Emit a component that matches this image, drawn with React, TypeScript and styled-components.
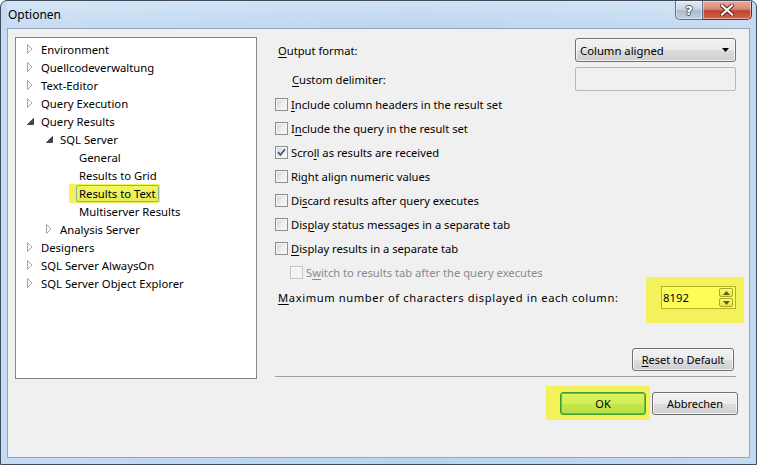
import React from 'react';
import styled, { createGlobalStyle } from 'styled-components';

const FONT = `"Noto Sans", "Open Sans", sans-serif`;

const Global = createGlobalStyle`
  html, body { margin: 0; padding: 0; background: #ffffff; }
  body { font-family: ${FONT}; font-size: 11px; color: #000; }
  * { box-sizing: border-box; }
`;

const Window = styled.div`
  width: 757px;
  height: 465px;
  border: 1px solid #414c5a;
  border-radius: 7px 7px 0 0;
  background: linear-gradient(to right, #c4dbf3 0%, #b9d3ef 55%, #c3daf2 100%);
  display: flex;
  flex-direction: column;
  padding: 0 6px 6px 6px;
  overflow: hidden;
`;

const TitleBar = styled.div`
  height: 27px;
  display: flex;
  align-items: flex-start;
  background: linear-gradient(to bottom, rgba(255,255,255,0.3), rgba(255,255,255,0.05));
`;

const Title = styled.div`
  padding: 6px 0 0 1px;
  font-size: 12px;
  line-height: 16px;
  color: #000;
`;

const CaptionButtons = styled.div`
  margin-left: auto;
  margin-right: -2px;
  display: flex;
`;

const CaptionButton = styled.div<{ $close?: boolean }>`
  height: 19px;
  width: ${p => (p.$close ? '49px' : '28px')};
  display: flex;
  align-items: center;
  justify-content: center;
  border: 1px solid ${p => (p.$close ? '#6b2a22' : '#5f6f83')};
  border-top: none;
  border-left: ${p => (p.$close ? 'none' : '1px solid #5f6f83')};
  border-radius: ${p => (p.$close ? '0 0 5px 0' : '0 0 0 5px')};
  background: ${p =>
    p.$close
      ? 'linear-gradient(to bottom, #e9a99c 0%, #d98878 45%, #c2412b 55%, #d1664c 100%)'
      : 'linear-gradient(to bottom, #e3ebf4 0%, #c9d6e5 45%, #a9bcd2 55%, #bdd0e6 100%)'};
  box-shadow: inset 0 0 0 1px rgba(255,255,255,0.45);
`;

const HelpGlyph = styled.span`
  font-family: "DejaVu Sans", sans-serif;
  font-weight: bold;
  font-size: 13px;
  line-height: 13px;
  color: #ffffff;
  text-shadow: 1px 0 0 #4c5a6c, -1px 0 0 #4c5a6c, 0 1px 0 #4c5a6c, 0 -1px 0 #4c5a6c;
`;

const Client = styled.div`
  flex: 1;
  border: 1px solid #97a5b6;
  background: #f0f0f0;
  display: flex;
  padding: 8px 11px 0 7px;
`;

const TreeBox = styled.div`
  width: 242px;
  height: 342px;
  border: 1px solid #828790;
  background: #ffffff;
  padding-top: 2px;
  display: flex;
  flex-direction: column;
`;

const TreeRow = styled.div<{ $level: number }>`
  height: 18px;
  display: flex;
  align-items: center;
  padding-left: ${p => 5 + p.$level * 19}px;
  white-space: nowrap;
`;

const Expander = styled.span`
  width: 17px;
  height: 18px;
  display: flex;
  align-items: center;
  padding-left: 6px;
`;

const NodeLabel = styled.span<{ $selected?: boolean }>`
  display: inline-flex;
  align-items: center;
  height: 17px;
  padding: 0 ${p => (p.$selected ? '2px' : '3px')};
  border: ${p => (p.$selected ? '1px solid #8db09a' : 'none')};
  border-radius: 2px;
  background: ${p => (p.$selected ? 'linear-gradient(to bottom, #f4f75e, #e3ee5a)' : 'transparent')};
  font-size: 11.3px;
`;

const Marker = styled.span`
  display: inline-flex;
  align-items: center;
  background: #f3f25a;
`;

const TreeMarker = styled(Marker)`
  margin: -1px -1px -1px -7px;
  padding: 1px 1px 1px 7px;
`;

const RightPanel = styled.div`
  flex: 1;
  margin-left: 18px;
  display: flex;
  flex-direction: column;
`;

const FieldRow = styled.div<{ $top: number; $indent?: number }>`
  height: 24px;
  margin-top: ${p => p.$top}px;
  display: flex;
  align-items: center;
  justify-content: space-between;
  padding-left: ${p => p.$indent ?? 0}px;
  padding-right: 2px;
`;

const FieldLabel = styled.span<{ $disabled?: boolean; $wide?: boolean }>`
  font-size: 11.2px;
  white-space: nowrap;
  letter-spacing: ${p => (p.$wide ? '0.6px' : '0')};
  color: ${p => (p.$disabled ? '#8a8a8a' : '#000')};
  u { text-decoration: underline; text-underline-offset: 2px; }
`;

const Select = styled.div`
  width: 161px;
  height: 24px;
  border: 1px solid #707070;
  border-radius: 3px;
  background: linear-gradient(to bottom, #f2f2f2 0%, #ebebeb 50%, #dddddd 51%, #cfcfcf 100%);
  box-shadow: inset 0 0 0 1px rgba(255,255,255,0.7);
  display: flex;
  align-items: center;
  justify-content: space-between;
  padding: 0 6px 0 4px;
  font-size: 11.3px;
`;

const TextBox = styled.div`
  width: 161px;
  height: 24px;
  border: 1px solid #b8b8b8;
  border-radius: 2px;
  background: #f0f0f0;
`;

const CheckRow = styled.div<{ $indent?: number }>`
  height: 24px;
  display: flex;
  align-items: center;
  gap: 3px;
  padding-left: ${p => p.$indent ?? 0}px;
`;

const Box = styled.span<{ $disabled?: boolean }>`
  width: 13px;
  height: 13px;
  border: 1px solid ${p => (p.$disabled ? '#c4c4c4' : '#8e8f8f')};
  background: ${p => (p.$disabled ? '#f4f4f4' : 'linear-gradient(135deg, #d6d6d6 0%, #efefef 60%, #fbfbfb 100%)')};
  box-shadow: inset 0 0 0 1px ${p => (p.$disabled ? '#f8f8f8' : '#f4f4f4')};
  display: flex;
  align-items: center;
  justify-content: center;
  flex: none;
`;

const MaxRow = styled.div`
  height: 23px;
  margin-top: 2px;
  display: flex;
  align-items: center;
  justify-content: space-between;
  padding-left: 3px;
  padding-right: 2px;
`;

const SpinMarker = styled(Marker)`
  margin: -9px -8px -14px -15px;
  padding: 9px 8px 14px 15px;
`;

const Spinner = styled.div`
  width: 75px;
  height: 23px;
  border: 1px solid #b4b322;
  background: #fdfd58;
  display: flex;
  align-items: center;
  justify-content: space-between;
  padding: 0 2px 0 1px;
  font-size: 11.3px;
`;

const SpinButtons = styled.div`
  display: flex;
  flex-direction: column;
  gap: 1px;
`;

const SpinButton = styled.div`
  width: 14px;
  height: 9px;
  border: 1px solid #a9a82a;
  border-radius: 2px;
  background: linear-gradient(to bottom, #fbfb70, #e6e64a);
  display: flex;
  align-items: center;
  justify-content: center;
`;

const ResetRow = styled.div`
  margin-top: 39px;
  display: flex;
  justify-content: flex-end;
  padding-right: 4px;
`;

const Button = styled.div<{ $w: number; $default?: boolean }>`
  width: ${p => p.$w}px;
  height: 23px;
  border: 1px solid ${p => (p.$default ? '#3e9f2c' : '#707070')};
  border-radius: 3px;
  background: ${p =>
    p.$default
      ? 'linear-gradient(to bottom, #dcf35e 0%, #d2ee56 50%, #c3e64b 51%, #b9df45 100%)'
      : 'linear-gradient(to bottom, #f2f2f2 0%, #ebebeb 50%, #dddddd 51%, #cfcfcf 100%)'};
  box-shadow: inset 0 0 0 1px ${p => (p.$default ? '#63c23c' : 'rgba(255,255,255,0.7)')};
  display: flex;
  align-items: center;
  justify-content: center;
  font-size: 11px;
  u { text-decoration: underline; text-underline-offset: 2px; }
`;

const Separator = styled.div`
  margin-top: 5px;
  margin-right: 2px;
  border-top: 1px solid #a0a0a0;
`;

const ButtonRow = styled.div`
  margin-top: 9px;
  display: flex;
  justify-content: flex-end;
  align-items: center;
  gap: 2px;
`;

const OkMarker = styled(Marker)`
  padding: 6px 4px 5px 14px;
`;

const Collapsed = () => (
  <svg width="6" height="10" viewBox="0 0 6 10">
    <path d="M0.5 0.5 L5 5 L0.5 9.5 Z" fill="#ffffff" stroke="#a6a6a6" strokeWidth="1" />
  </svg>
);

const Expanded = () => (
  <svg width="7" height="7" viewBox="0 0 7 7">
    <path d="M6.5 0.5 L6.5 6.5 L0.5 6.5 Z" fill="#464646" stroke="#464646" strokeWidth="1" strokeLinejoin="round" />
  </svg>
);

const Check = () => (
  <svg width="9" height="9" viewBox="0 0 9 9">
    <path d="M1 4.2 L3.4 6.8 L8 1.2" fill="none" stroke="#41577d" strokeWidth="1.8" />
  </svg>
);

type Node = { label: string; level: number; exp?: 'c' | 'e'; selected?: boolean };

const nodes: Node[] = [
  { label: 'Environment', level: 0, exp: 'c' },
  { label: 'Quellcodeverwaltung', level: 0, exp: 'c' },
  { label: 'Text-Editor', level: 0, exp: 'c' },
  { label: 'Query Execution', level: 0, exp: 'c' },
  { label: 'Query Results', level: 0, exp: 'e' },
  { label: 'SQL Server', level: 1, exp: 'e' },
  { label: 'General', level: 2 },
  { label: 'Results to Grid', level: 2 },
  { label: 'Results to Text', level: 2, selected: true },
  { label: 'Multiserver Results', level: 2 },
  { label: 'Analysis Server', level: 1, exp: 'c' },
  { label: 'Designers', level: 0, exp: 'c' },
  { label: 'SQL Server AlwaysOn', level: 0, exp: 'c' },
  { label: 'SQL Server Object Explorer', level: 0, exp: 'c' },
];

type Opt = { pre: string; key: string; post: string; checked?: boolean; disabled?: boolean; indent?: number };

const options: Opt[] = [
  { pre: '', key: 'I', post: 'nclude column headers in the result set' },
  { pre: 'I', key: 'n', post: 'clude the query in the result set' },
  { pre: 'Scro', key: 'l', post: 'l as results are received', checked: true },
  { pre: 'Ri', key: 'g', post: 'ht align numeric values' },
  { pre: 'Di', key: 's', post: 'card results after query executes' },
  { pre: 'Dis', key: 'p', post: 'lay status messages in a separate tab' },
  { pre: '', key: 'D', post: 'isplay results in a separate tab' },
  { pre: 'S', key: 'w', post: 'itch to results tab after the query executes', disabled: true, indent: 15 },
];

export default function App() {
  return (
    <>
      <Global />
      <Window>
        <TitleBar>
          <Title>Optionen</Title>
          <CaptionButtons>
            <CaptionButton>
              <HelpGlyph>?</HelpGlyph>
            </CaptionButton>
            <CaptionButton $close>
              <svg width="14" height="12" viewBox="0 0 14 12">
                <path d="M2 1.5 L12 10.5 M12 1.5 L2 10.5" stroke="#5a2018" strokeWidth="4" strokeLinecap="square" />
                <path d="M2 1.5 L12 10.5 M12 1.5 L2 10.5" stroke="#ffffff" strokeWidth="2.2" strokeLinecap="square" />
              </svg>
            </CaptionButton>
          </CaptionButtons>
        </TitleBar>
        <Client>
          <TreeBox>
            {nodes.map(n => (
              <TreeRow key={n.label} $level={n.level}>
                <Expander>
                  {n.exp === 'c' && <Collapsed />}
                  {n.exp === 'e' && <Expanded />}
                </Expander>
                {n.selected ? (
                  <TreeMarker>
                    <NodeLabel $selected>{n.label}</NodeLabel>
                  </TreeMarker>
                ) : (
                  <NodeLabel>{n.label}</NodeLabel>
                )}
              </TreeRow>
            ))}
          </TreeBox>
          <RightPanel>
            <FieldRow $top={1} $indent={3}>
              <FieldLabel>
                <u>O</u>utput format:
              </FieldLabel>
              <Select>
                <span>Column aligned</span>
                <svg width="7" height="4" viewBox="0 0 7 4">
                  <path d="M0 0 L7 0 L3.5 4 Z" fill="#000" />
                </svg>
              </Select>
            </FieldRow>
            <FieldRow $top={5} $indent={17}>
              <FieldLabel>
                <u>C</u>ustom delimiter:
              </FieldLabel>
              <TextBox />
            </FieldRow>
            <div style={{ height: 1 }} />
            {options.map(o => (
              <CheckRow key={o.post} $indent={o.indent}>
                <Box $disabled={o.disabled}>{o.checked && <Check />}</Box>
                <FieldLabel $disabled={o.disabled}>
                  {o.pre}
                  <u>{o.key}</u>
                  {o.post}
                </FieldLabel>
              </CheckRow>
            ))}
            <MaxRow>
              <FieldLabel $wide>
                <u>M</u>aximum number of characters displayed in each column:
              </FieldLabel>
              <SpinMarker>
                <Spinner>
                  <span>8192</span>
                  <SpinButtons>
                    <SpinButton>
                      <svg width="7" height="4" viewBox="0 0 7 4">
                        <path d="M0 4 L7 4 L3.5 0 Z" fill="#5c5c20" />
                      </svg>
                    </SpinButton>
                    <SpinButton>
                      <svg width="7" height="4" viewBox="0 0 7 4">
                        <path d="M0 0 L7 0 L3.5 4 Z" fill="#5c5c20" />
                      </svg>
                    </SpinButton>
                  </SpinButtons>
                </Spinner>
              </SpinMarker>
            </MaxRow>
            <ResetRow>
              <Button $w={102}>
                <span>
                  <u>R</u>eset to Default
                </span>
              </Button>
            </ResetRow>
            <Separator />
            <ButtonRow>
              <OkMarker>
                <Button $w={86} $default>
                  OK
                </Button>
              </OkMarker>
              <Button $w={86}>Abbrechen</Button>
            </ButtonRow>
          </RightPanel>
        </Client>
      </Window>
    </>
  );
}
